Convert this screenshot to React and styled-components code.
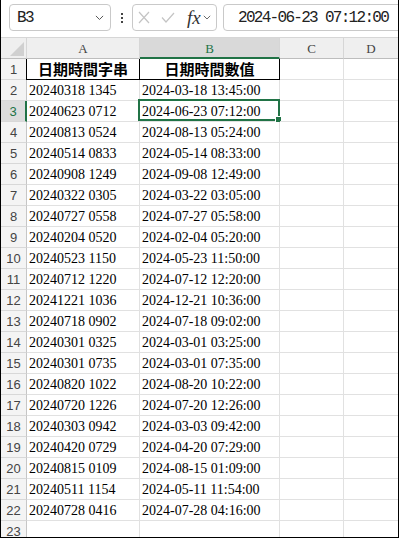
import React from "react";
import styled, { createGlobalStyle } from "styled-components";

const rows = [
  ["20240318 1345", "2024-03-18 13:45:00"],
  ["20240623 0712", "2024-06-23 07:12:00"],
  ["20240813 0524", "2024-08-13 05:24:00"],
  ["20240514 0833", "2024-05-14 08:33:00"],
  ["20240908 1249", "2024-09-08 12:49:00"],
  ["20240322 0305", "2024-03-22 03:05:00"],
  ["20240727 0558", "2024-07-27 05:58:00"],
  ["20240204 0520", "2024-02-04 05:20:00"],
  ["20240523 1150", "2024-05-23 11:50:00"],
  ["20240712 1220", "2024-07-12 12:20:00"],
  ["20241221 1036", "2024-12-21 10:36:00"],
  ["20240718 0902", "2024-07-18 09:02:00"],
  ["20240301 0325", "2024-03-01 03:25:00"],
  ["20240301 0735", "2024-03-01 07:35:00"],
  ["20240820 1022", "2024-08-20 10:22:00"],
  ["20240720 1226", "2024-07-20 12:26:00"],
  ["20240303 0942", "2024-03-03 09:42:00"],
  ["20240420 0729", "2024-04-20 07:29:00"],
  ["20240815 0109", "2024-08-15 01:09:00"],
  ["20240511 1154", "2024-05-11 11:54:00"],
  ["20240728 0416", "2024-07-28 04:16:00"],
  ["", ""]
];

const GREEN = "#217346";

const Global = createGlobalStyle`
  body {
    margin: 0;
    background: #fff;
  }
`;

const Frame = styled.div`
  width: 399px;
  height: 538px;
  box-sizing: border-box;
  border: 1px solid #000;
  border-top: none;
  overflow: hidden;
  background: #fff;
`;

const Toolbar = styled.div`
  height: 37px;
  display: flex;
  align-items: flex-start;
  padding: 4px 0 0 8px;
  box-sizing: border-box;
  overflow: hidden;
`;

const Box = styled.div`
  height: 27px;
  box-sizing: border-box;
  border: 1px solid #c9c9c9;
  border-radius: 4px;
  background: #fff;
  display: flex;
  align-items: center;
`;

const NameBox = styled(Box)`
  width: 102px;
  padding: 0 6px 0 7px;
  justify-content: space-between;
`;

const MonoText = styled.span`
  font-family: "Liberation Mono", monospace;
  font-size: 16px;
  letter-spacing: -1.7px;
  color: #222;
`;

const Dots = styled.div`
  width: 21px;
  height: 27px;
  display: flex;
  flex-direction: column;
  align-items: center;
  justify-content: center;
  gap: 2px;
  span {
    width: 2px;
    height: 2px;
    background: #444;
  }
`;

const FxBox = styled(Box)`
  width: 85px;
  padding: 0 0 0 5px;
`;

const Fx = styled.span`
  font-family: "Liberation Serif", serif;
  font-style: italic;
  font-weight: 400;
  font-size: 19px;
  color: #333;
  margin-left: 12px;
  margin-right: 2px;
`;

const FormulaBox = styled(Box)`
  flex: 1;
  margin-left: 6px;
  margin-right: -12px;
  padding-left: 14px;
`;

const Grid = styled.div`
  display: grid;
  grid-template-columns: 26px 113px 140px 64px 1fr;
`;

const HeaderRow = styled(Grid)`
  border-top: 1px solid #d6d6d6;
  height: 22px;
  box-sizing: border-box;
  background: #efefef;
`;

const ColHead = styled.div`
  height: 21px;
  box-sizing: border-box;
  border-right: 1px solid #d6d6d6;
  border-bottom: ${(p) => (p.$active ? `2px solid ${GREEN}` : "1px solid #bdbdbd")};
  background: ${(p) => (p.$active ? "#d9d9d9" : "#efefef")};
  color: ${(p) => (p.$active ? GREEN : "#444")};
  font-family: "Liberation Serif", serif;
  font-size: 13px;
  line-height: 22px;
  text-align: center;
  &:last-child {
    border-right: none;
  }
`;

const Corner = styled(ColHead)`
  position: relative;
  svg {
    display: block;
    position: absolute;
    right: 2px;
    bottom: 2px;
  }
`;

const Row = styled(Grid)`
  height: 21px;
`;

const RowHead = styled.div`
  box-sizing: border-box;
  height: 21px;
  border-bottom: 1px solid #d8d8d8;
  border-right: ${(p) => (p.$active ? `2px solid ${GREEN}` : "1px solid #c6c6c6")};
  background: ${(p) => (p.$active ? "#dcdcdc" : "#f4f4f4")};
  color: ${(p) => (p.$active ? GREEN : "#444")};
  font-family: "Liberation Sans", sans-serif;
  font-size: 13px;
  line-height: 21px;
  text-align: center;
`;

const Cell = styled.div`
  position: relative;
  box-sizing: border-box;
  height: 21px;
  padding: 1px 0 0 2px;
  border-right: 1px solid ${(p) => (p.$boxed ? "#000" : "#e1e1e1")};
  border-bottom: 1px solid ${(p) => (p.$boxed ? "#000" : "#e1e1e1")};
  font-family: "Liberation Serif", serif;
  font-size: 14px;
  line-height: 20px;
  color: #000;
  white-space: nowrap;
  &:last-child {
    border-right: none;
  }
`;

const TitleCell = styled(Cell)`
  padding: 0;
  text-align: center;
  font-family: "Noto Sans CJK TC", sans-serif;
  font-weight: 700;
  font-size: 15px;
  line-height: 20px;
  box-shadow: ${(p) => (p.$first ? "-1px 0 0 #000" : "none")};
`;

const Selection = styled.div`
  position: absolute;
  top: -2px;
  left: -2px;
  right: -1px;
  bottom: 0;
  border: 2px solid ${GREEN};
  pointer-events: none;
`;

const Handle = styled.div`
  position: absolute;
  right: -4px;
  bottom: -4px;
  width: 5px;
  height: 5px;
  background: ${GREEN};
  border: 1px solid #fff;
`;

function Chevron({ size = 9 }) {
  return (
    <svg width={size} height={size * 0.6} viewBox="0 0 10 6">
      <path d="M1 1 L5 5 L9 1" fill="none" stroke="#555" strokeWidth="1.1" />
    </svg>
  );
}

function Cross() {
  return (
    <svg width="12" height="13" viewBox="0 0 12 13">
      <path d="M1 1 L11 12 M11 1 L1 12" stroke="#c4c4c4" strokeWidth="1.2" fill="none" />
    </svg>
  );
}

function Check() {
  return (
    <svg width="14" height="11" viewBox="0 0 14 11" style={{ marginLeft: 11 }}>
      <path d="M1 5.5 L5 10 L13 1" stroke="#c4c4c4" strokeWidth="1.2" fill="none" />
    </svg>
  );
}

export default function App() {
  return (
    <Frame>
      <Global />
      <Toolbar>
        <NameBox>
          <MonoText>B3</MonoText>
          <Chevron />
        </NameBox>
        <Dots>
          <span />
          <span />
          <span />
        </Dots>
        <FxBox>
          <Cross />
          <Check />
          <Fx>fx</Fx>
          <Chevron size={8} />
        </FxBox>
        <FormulaBox>
          <MonoText>2024-06-23 07:12:00</MonoText>
        </FormulaBox>
      </Toolbar>

      <HeaderRow>
        <Corner>
          <svg width="14" height="14" viewBox="0 0 14 14">
            <path d="M14 0 L14 14 L0 14 Z" fill="#d0d0d0" />
          </svg>
        </Corner>
        <ColHead>A</ColHead>
        <ColHead $active>B</ColHead>
        <ColHead>C</ColHead>
        <ColHead>D</ColHead>
      </HeaderRow>

      <Row>
        <RowHead>1</RowHead>
        <TitleCell $boxed $first>日期時間字串</TitleCell>
        <TitleCell $boxed>日期時間數值</TitleCell>
        <Cell />
        <Cell />
      </Row>

      {rows.map(([text, value], i) => {
        const n = i + 2;
        const active = n === 3;
        return (
          <Row key={n}>
            <RowHead $active={active}>{n}</RowHead>
            <Cell>{text}</Cell>
            <Cell>
              {value}
              {active && (
                <Selection>
                  <Handle />
                </Selection>
              )}
            </Cell>
            <Cell />
            <Cell />
          </Row>
        );
      })}
    </Frame>
  );
}
